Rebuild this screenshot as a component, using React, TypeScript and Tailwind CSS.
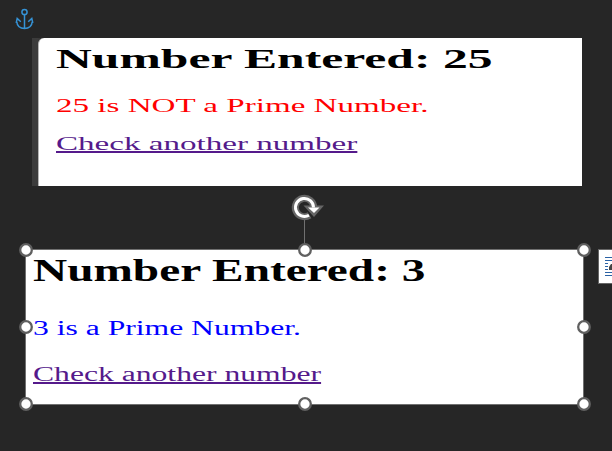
const handles = [
  [26, 250], [305, 250], [584, 250],
  [26, 327], [584, 327],
  [26, 404], [305, 404], [584, 404],
];

const line = "block w-max origin-left whitespace-nowrap";

export default function App() {
  return (
    <main className="relative h-[451px] w-[612px] overflow-hidden bg-[#262626] font-['Liberation_Serif',serif]">
      <div className="h-[38px] pl-[15px] pt-2">
        <svg width="20" height="22" viewBox="0 0 20 22" fill="none" stroke="#3592d5" strokeWidth="1.5">
          <circle cx="9.5" cy="4" r="2.6" />
          <path d="M9.5 6.6V20.2M1.8 14.2C2.2 18 5.2 20.4 9.5 20.4s7.300-2.400 7.700-6.200M1.200 15l1-4.500 3.600 3.300M17.800 15l-1-4.500-3.600 3.300" />
        </svg>
      </div>

      <section className="ml-8 flex h-[148px] w-[550px] bg-gradient-to-r from-[#3c3c3c] from-[1%] to-[#303030] to-[2%]">
        <div className="ml-[6px] flex-1 rounded-tl-[6px] border-l border-[#b5b5b5] bg-white pl-[16.500px]">
          <h1 className={`${line} scale-x-[1.838] text-[27px] font-bold leading-[42px] text-black`}>Number Entered: 25</h1>
          <p className={`${line} mt-[14px] scale-x-[1.838] text-[18px] leading-6 text-[#ff0000]`}>25 is NOT a Prime Number.</p>
          <a className={`${line} mt-4 scale-x-[1.838] text-[18px] leading-5 text-[#551a8b] underline decoration-2 underline-offset-1 [text-decoration-skip-ink:none]`}>Check another number</a>
        </div>
      </section>

      <section className="ml-[25px] mt-[63px] h-[156px] w-[559px] border border-[#707070] bg-white pl-[6.500px]">
        <h1 className={`${line} scale-x-[1.478] text-[32px] font-bold leading-[40px] text-black`}>Number Entered: 3</h1>
        <p className={`${line} mt-[26px] scale-x-[1.485] text-[21.3px] leading-6 text-[#0000ff]`}>3 is a Prime Number.</p>
        <a className={`${line} mt-[22px] scale-x-[1.485] text-[21.3px] leading-6 text-[#551a8b] underline decoration-2 underline-offset-1 [text-decoration-skip-ink:none]`}>Check another number</a>
      </section>

      <svg className="absolute inset-0" width="612" height="451" viewBox="0 0 612 451" fill="none">
        <path d="M304.5 219V245" stroke="#707070" />
        <path d="M309.500 215.200A9.200 9.200 0 1 1 313.700 207.500" stroke="#666" strokeWidth="7" />
        <path d="M303.500 205.500H324L314 217Z" fill="#666" />
        <path d="M309 215.200A9 9 0 1 1 313.500 207.500" stroke="#fff" strokeWidth="3" />
        <path d="M308 207.500H319.500L314 213Z" fill="#fff" />
        {handles.map(([x, y]) => (
          <circle key={`${x}-${y}`} cx={x} cy={y} r="5.8" fill="#fff" stroke="#606060" strokeWidth="2.3" />
        ))}
        <rect x="598.5" y="249.500" width="20" height="34" fill="#fff" stroke="#666" />
        <path d="M605 257.500h7M605 260.500h7M605 263.500h3M605 266.500h3M605 269.500h3M605 272.500h7M605 275.500h7" stroke="#2b62a5" />
        <path d="M609 270v-3l2-3h1v6Z" fill="#444" />
      </svg>
    </main>
  );
}
